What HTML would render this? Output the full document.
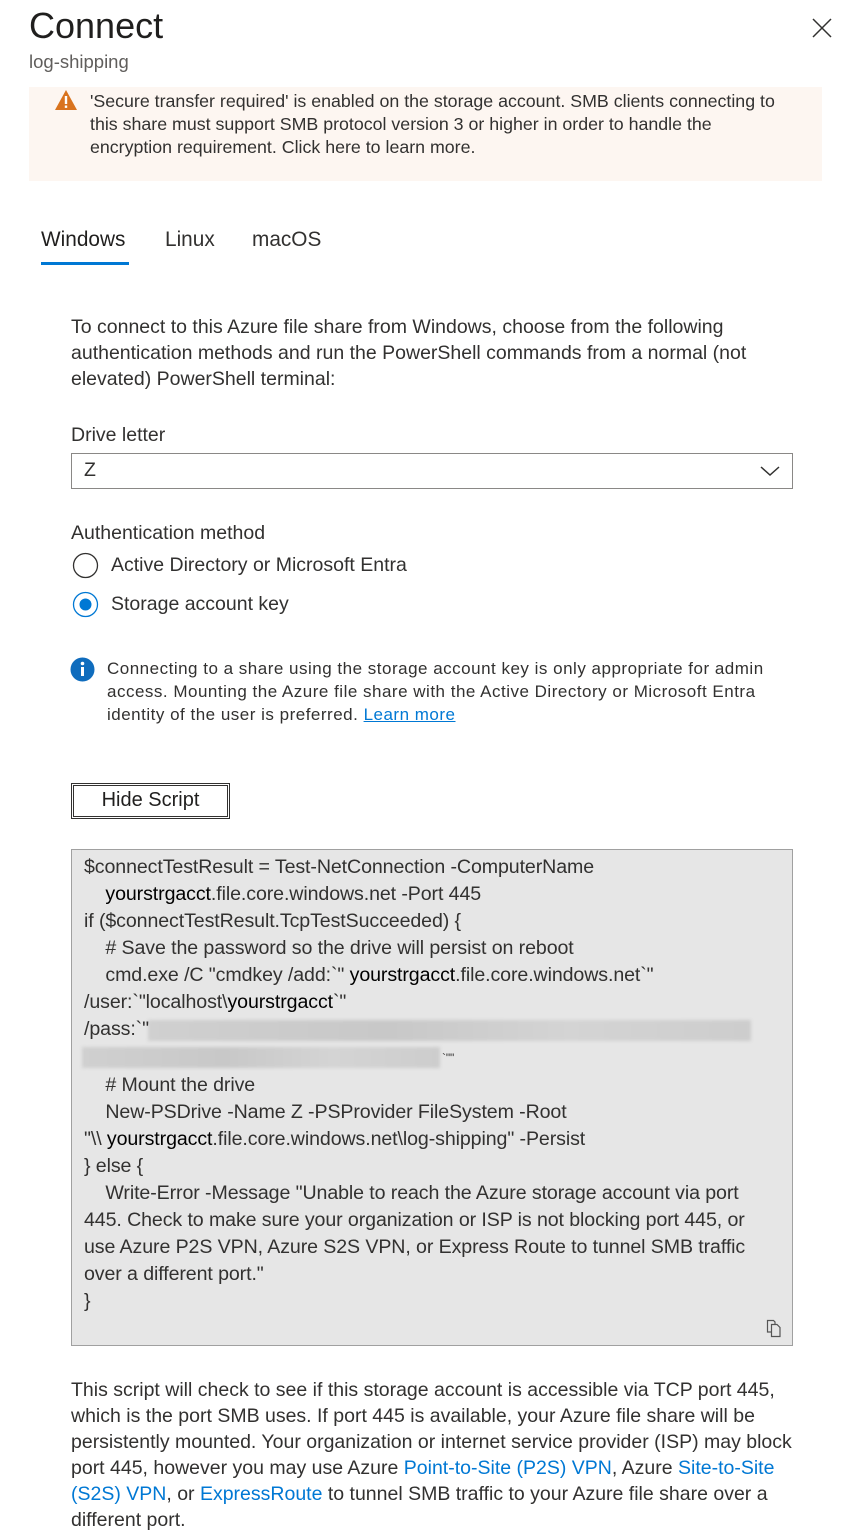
<!DOCTYPE html>
<html><head><meta charset="utf-8"><style>
body{margin:0;width:855px;height:1531px;background:#fff;font-family:"Liberation Sans",sans-serif;color:#323130;position:relative;overflow:hidden}
.a{position:absolute;white-space:nowrap}
.p{font-size:19.5px;line-height:26px}
.w{font-size:17.8px;line-height:23px;color:#323130}
.c{font-size:19.6px;line-height:27px;color:#323130;letter-spacing:-0.1px}
a{color:#0078d4;text-decoration:none}
.blur{position:absolute;background:linear-gradient(90deg,#d0d0d0,#c8c8c8 40%,#d4d4d4 70%,#cdcdcd);filter:blur(1.5px)}
</style></head><body>
<div class="a" style="left:29px;top:5px;font-size:36px;line-height:42px;color:#201f1e">Connect</div>
<div class="a" style="left:29px;top:51px;font-size:18.5px;line-height:22px;color:#605e5c">log-shipping</div>
<svg class="a" style="left:810px;top:16px" width="24" height="24" viewBox="0 0 24 24"><path d="M3 3L21 21M21 3L3 21" stroke="#323130" stroke-width="1.5"/></svg>

<div class="a" style="left:29px;top:87px;width:793px;height:94px;background:#fdf6f1"></div>
<svg class="a" style="left:54px;top:89px" width="24" height="22" viewBox="0 0 24 22"><path d="M12 1L23 21H1Z" fill="#d9731e"/><rect x="10.8" y="7" width="2.4" height="8" fill="#fff"/><rect x="10.8" y="16.5" width="2.4" height="2.4" fill="#fff"/></svg>
<div class="a w" style="left:90px;top:90px">'Secure transfer required' is enabled on the storage account. SMB clients connecting to<br>this share must support SMB protocol version 3 or higher in order to handle the<br>encryption requirement. Click here to learn more.</div>

<div class="a" style="left:41px;top:227px;font-size:20.8px;line-height:26px;color:#201f1e">Windows</div>
<div class="a" style="left:165px;top:227px;font-size:20.8px;line-height:26px">Linux</div>
<div class="a" style="left:252px;top:227px;font-size:20.8px;line-height:26px">macOS</div>
<div class="a" style="left:41px;top:262px;width:88px;height:3px;background:#0078d4"></div>

<div class="a p" style="left:71px;top:314px">To connect to this Azure file share from Windows, choose from the following<br>authentication methods and run the PowerShell commands from a normal (not<br>elevated) PowerShell terminal:</div>
<div class="a p" style="left:71px;top:422px">Drive letter</div>
<div class="a" style="left:71px;top:453px;width:720px;height:34px;border:1px solid #8a8886"></div>
<div class="a p" style="left:84px;top:457px">Z</div>
<svg class="a" style="left:759px;top:463px" width="22" height="16" viewBox="0 0 22 16"><path d="M2 4L11 12L20 4" fill="none" stroke="#323130" stroke-width="1.5"/></svg>

<div class="a p" style="left:71px;top:520px">Authentication method</div>
<svg class="a" style="left:72px;top:552px" width="27" height="27"><circle cx="13.5" cy="13.5" r="12" fill="none" stroke="#323130" stroke-width="1.3"/></svg>
<div class="a p" style="left:111px;top:552px">Active Directory or Microsoft Entra</div>
<svg class="a" style="left:72px;top:591px" width="27" height="27"><circle cx="13.5" cy="13.5" r="12" fill="none" stroke="#0078d4" stroke-width="1.3"/><circle cx="13.5" cy="13.5" r="6" fill="#0078d4"/></svg>
<div class="a p" style="left:111px;top:591px">Storage account key</div>

<svg class="a" style="left:70px;top:657px" width="25" height="25" viewBox="0 0 25 25"><circle cx="12.5" cy="12.5" r="12" fill="#0f6cbd"/><rect x="11" y="10" width="3" height="9" fill="#fff"/><circle cx="12.5" cy="6.5" r="1.8" fill="#fff"/></svg>
<div class="a w" style="left:107px;top:657px;font-size:17px;letter-spacing:0.5px">Connecting to a share using the storage account key is only appropriate for admin<br>access. Mounting the Azure file share with the Active Directory or Microsoft Entra<br>identity of the user is preferred. <a style="text-decoration:underline">Learn more</a></div>

<div class="a" style="left:71px;top:783px;width:157px;height:34px;border:1px solid #323130;outline:1px solid #323130;outline-offset:-3px"></div>
<div class="a" style="left:71px;top:786px;width:159px;text-align:center;font-size:20px;line-height:28px;color:#201f1e">Hide Script</div>

<div class="a" style="left:71px;top:849px;width:720px;height:495px;background:#e6e6e6;border:1px solid #a0a0a0"></div>
<div class="blur" style="left:148px;top:1020px;width:603px;height:21px"></div>
<div class="blur" style="left:82px;top:1047px;width:358px;height:21px"></div>
<div class="a c" style="left:84px;top:854px">$connectTestResult = Test-NetConnection -ComputerName<br>&nbsp;&nbsp;&nbsp;&nbsp;<span style="color:#000">yourstrgacct</span>.file.core.windows.net -Port 445<br>if ($connectTestResult.TcpTestSucceeded) {<br>&nbsp;&nbsp;&nbsp;&nbsp;# Save the password so the drive will persist on reboot<br>&nbsp;&nbsp;&nbsp;&nbsp;cmd.exe /C "cmdkey /add:`" <span style="color:#000">yourstrgacct</span>.file.core.windows.net`"<br>/user:`"localhost\<span style="color:#000">yourstrgacct</span>`"<br>/pass:`"<br><span style="margin-left:358px;font-size:12px">`""</span><br>&nbsp;&nbsp;&nbsp;&nbsp;# Mount the drive<br>&nbsp;&nbsp;&nbsp;&nbsp;New-PSDrive -Name Z -PSProvider FileSystem -Root<br>"\\ <span style="color:#000">yourstrgacct</span>.file.core.windows.net\log-shipping" -Persist<br>} else {<br>&nbsp;&nbsp;&nbsp;&nbsp;Write-Error -Message "Unable to reach the Azure storage account via port<br>445. Check to make sure your organization or ISP is not blocking port 445, or<br>use Azure P2S VPN, Azure S2S VPN, or Express Route to tunnel SMB traffic<br>over a different port."<br>}</div>
<svg class="a" style="left:765px;top:1319px" width="18" height="19" viewBox="0 0 18 19"><path d="M2.5 1.5H8.5L10 3V13H2.5Z" fill="none" stroke="#555" stroke-width="1.2"/><path d="M6.5 5.5H12L15 8.5V17.5H6.5Z" fill="#e6e6e6" stroke="#555" stroke-width="1.2"/></svg>

<div class="a p" style="left:71px;top:1377px">This script will check to see if this storage account is accessible via TCP port 445,<br>which is the port SMB uses. If port 445 is available, your Azure file share will be<br>persistently mounted. Your organization or internet service provider (ISP) may block<br>port 445, however you may use Azure <a>Point-to-Site (P2S) VPN</a>, Azure <a>Site-to-Site</a><br><a>(S2S) VPN</a>, or <a>ExpressRoute</a> to tunnel SMB traffic to your Azure file share over a<br>different port.</div>
</body></html>
